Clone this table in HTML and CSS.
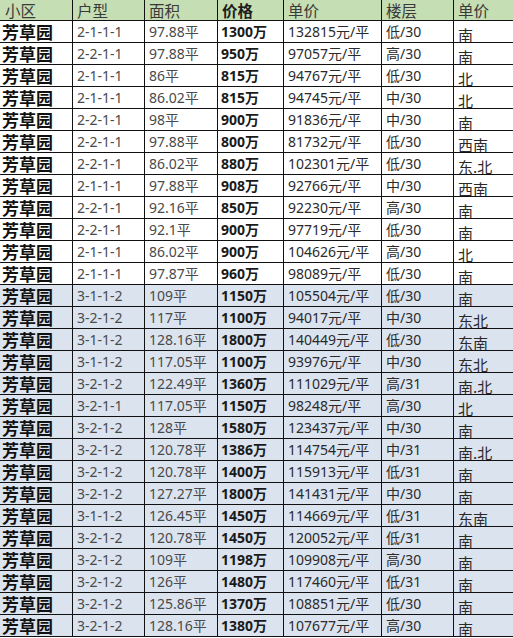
FILE: index.html
```html
<!DOCTYPE html>
<html lang="zh">
<head>
<meta charset="utf-8">
<title>芳草园</title>
<link rel="stylesheet" href="styles.css">
</head>
<body>
<table class="sheet">
<colgroup>
<col class="c1"><col class="c2"><col class="c3"><col class="c4"><col class="c5"><col class="c6"><col class="c7">
</colgroup>
<thead>
<tr class="head"><th>小区</th><th>户型</th><th>面积</th><th class="b">价格</th><th>单价</th><th>楼层</th><th>单价</th></tr>
</thead>
<tbody>
<tr><td class="name">芳草园</td><td class="t">2-1-1-1</td><td class="t">97.88平</td><td class="price">1300万</td><td class="u">132815元/平</td><td class="u">低/30</td><td class="dir">南</td></tr>
<tr><td class="name">芳草园</td><td class="t">2-2-1-1</td><td class="t">97.88平</td><td class="price">950万</td><td class="u">97057元/平</td><td class="u">高/30</td><td class="dir">南</td></tr>
<tr><td class="name">芳草园</td><td class="t">2-1-1-1</td><td class="t">86平</td><td class="price">815万</td><td class="u">94767元/平</td><td class="u">低/30</td><td class="dir">北</td></tr>
<tr><td class="name">芳草园</td><td class="t">2-1-1-1</td><td class="t">86.02平</td><td class="price">815万</td><td class="u">94745元/平</td><td class="u">中/30</td><td class="dir">北</td></tr>
<tr><td class="name">芳草园</td><td class="t">2-2-1-1</td><td class="t">98平</td><td class="price">900万</td><td class="u">91836元/平</td><td class="u">中/30</td><td class="dir">南</td></tr>
<tr><td class="name">芳草园</td><td class="t">2-2-1-1</td><td class="t">97.88平</td><td class="price">800万</td><td class="u">81732元/平</td><td class="u">低/30</td><td class="dir">西南</td></tr>
<tr><td class="name">芳草园</td><td class="t">2-2-1-1</td><td class="t">86.02平</td><td class="price">880万</td><td class="u">102301元/平</td><td class="u">低/30</td><td class="dir">东.北</td></tr>
<tr><td class="name">芳草园</td><td class="t">2-1-1-1</td><td class="t">97.88平</td><td class="price">908万</td><td class="u">92766元/平</td><td class="u">中/30</td><td class="dir">西南</td></tr>
<tr><td class="name">芳草园</td><td class="t">2-2-1-1</td><td class="t">92.16平</td><td class="price">850万</td><td class="u">92230元/平</td><td class="u">高/30</td><td class="dir">南</td></tr>
<tr><td class="name">芳草园</td><td class="t">2-2-1-1</td><td class="t">92.1平</td><td class="price">900万</td><td class="u">97719元/平</td><td class="u">低/30</td><td class="dir">南</td></tr>
<tr><td class="name">芳草园</td><td class="t">2-1-1-1</td><td class="t">86.02平</td><td class="price">900万</td><td class="u">104626元/平</td><td class="u">高/30</td><td class="dir">北</td></tr>
<tr><td class="name">芳草园</td><td class="t">2-1-1-1</td><td class="t">97.87平</td><td class="price">960万</td><td class="u">98089元/平</td><td class="u">低/30</td><td class="dir">南</td></tr>
<tr class="blue"><td class="name">芳草园</td><td class="t">3-1-1-2</td><td class="t">109平</td><td class="price">1150万</td><td class="u">105504元/平</td><td class="u">低/30</td><td class="dir">南</td></tr>
<tr class="blue"><td class="name">芳草园</td><td class="t">3-2-1-2</td><td class="t">117平</td><td class="price">1100万</td><td class="u">94017元/平</td><td class="u">中/30</td><td class="dir">东北</td></tr>
<tr class="blue"><td class="name">芳草园</td><td class="t">3-1-1-2</td><td class="t">128.16平</td><td class="price">1800万</td><td class="u">140449元/平</td><td class="u">低/30</td><td class="dir">东南</td></tr>
<tr class="blue"><td class="name">芳草园</td><td class="t">3-1-1-2</td><td class="t">117.05平</td><td class="price">1100万</td><td class="u">93976元/平</td><td class="u">中/30</td><td class="dir">东北</td></tr>
<tr class="blue"><td class="name">芳草园</td><td class="t">3-2-1-2</td><td class="t">122.49平</td><td class="price">1360万</td><td class="u">111029元/平</td><td class="u">高/31</td><td class="dir">南.北</td></tr>
<tr class="blue"><td class="name">芳草园</td><td class="t">3-2-1-1</td><td class="t">117.05平</td><td class="price">1150万</td><td class="u">98248元/平</td><td class="u">高/30</td><td class="dir">北</td></tr>
<tr class="blue"><td class="name">芳草园</td><td class="t">3-2-1-2</td><td class="t">128平</td><td class="price">1580万</td><td class="u">123437元/平</td><td class="u">中/30</td><td class="dir">南</td></tr>
<tr class="blue"><td class="name">芳草园</td><td class="t">3-2-1-2</td><td class="t">120.78平</td><td class="price">1386万</td><td class="u">114754元/平</td><td class="u">中/31</td><td class="dir">南.北</td></tr>
<tr class="blue"><td class="name">芳草园</td><td class="t">3-2-1-2</td><td class="t">120.78平</td><td class="price">1400万</td><td class="u">115913元/平</td><td class="u">低/31</td><td class="dir">南</td></tr>
<tr class="blue"><td class="name">芳草园</td><td class="t">3-2-1-2</td><td class="t">127.27平</td><td class="price">1800万</td><td class="u">141431元/平</td><td class="u">中/30</td><td class="dir">南</td></tr>
<tr class="blue"><td class="name">芳草园</td><td class="t">3-1-1-2</td><td class="t">126.45平</td><td class="price">1450万</td><td class="u">114669元/平</td><td class="u">低/31</td><td class="dir">东南</td></tr>
<tr class="blue"><td class="name">芳草园</td><td class="t">3-2-1-2</td><td class="t">120.78平</td><td class="price">1450万</td><td class="u">120052元/平</td><td class="u">低/31</td><td class="dir">南</td></tr>
<tr class="blue"><td class="name">芳草园</td><td class="t">3-2-1-2</td><td class="t">109平</td><td class="price">1198万</td><td class="u">109908元/平</td><td class="u">高/30</td><td class="dir">南</td></tr>
<tr class="blue"><td class="name">芳草园</td><td class="t">3-2-1-2</td><td class="t">126平</td><td class="price">1480万</td><td class="u">117460元/平</td><td class="u">低/31</td><td class="dir">南</td></tr>
<tr class="blue"><td class="name">芳草园</td><td class="t">3-2-1-2</td><td class="t">125.86平</td><td class="price">1370万</td><td class="u">108851元/平</td><td class="u">低/30</td><td class="dir">南</td></tr>
<tr class="blue"><td class="name">芳草园</td><td class="t">3-2-1-2</td><td class="t">128.16平</td><td class="price">1380万</td><td class="u">107677元/平</td><td class="u">高/30</td><td class="dir">南</td></tr>
</tbody>
</table>
</body>
</html>
```
FILE: styles.css
```css
html, body {
  margin: 0;
  padding: 0;
  background: #ffffff;
}
body {
  width: 513px;
  overflow: hidden;
  font-family: "Noto Sans", "Noto Sans CJK SC", sans-serif;
}
.sheet {
  border-collapse: separate;
  border-spacing: 0;
  table-layout: fixed;
  width: 513px;
}
.c1 { width: 72px; }
.c2 { width: 72px; }
.c3 { width: 73px; }
.c4 { width: 66px; }
.c5 { width: 98px; }
.c6 { width: 72px; }
.c7 { width: 60px; }

.sheet th,
.sheet td {
  box-sizing: border-box;
  padding: 0 0 0 4px;
  border-left: 1px solid #111;
  border-bottom: 1px solid #111;
  text-align: left;
  white-space: nowrap;
  overflow: hidden;
  vertical-align: top;
}
.sheet th:first-child,
.sheet td:first-child {
  border-left: none;
}
.head th {
  height: 21px;
  line-height: 20px;
  background: #c6deb3;
  font-family: "Noto Sans CJK SC", sans-serif;
  font-weight: 400;
  font-size: 15.5px;
  color: #3a3a3a;
}
.head th:first-child { padding-left: 5px; }
.head th.b {
  font-weight: 700;
  color: #1e1e1e;
}
.sheet td {
  height: 22px;
  line-height: 21px;
  font-size: 14px;
}
.blue td {
  background: #dbe3ef;
}
.sheet td.name {
  font-family: "Noto Sans CJK SC", sans-serif;
  font-size: 17px;
  font-weight: 700;
  color: #111;
  padding-left: 2px;
}
.sheet td.t {
  color: #4a4a4a;
}
.sheet td.price {
  font-weight: 700;
  color: #1a1a1a;
  padding-left: 3px;
}
.sheet td.u {
  color: #2a2a2a;
}
.sheet td.dir {
  font-family: "Noto Sans CJK SC", sans-serif;
  color: #2a2a2a;
  font-size: 15px;
  padding-top: 6px;
  line-height: 15px;
}
```
